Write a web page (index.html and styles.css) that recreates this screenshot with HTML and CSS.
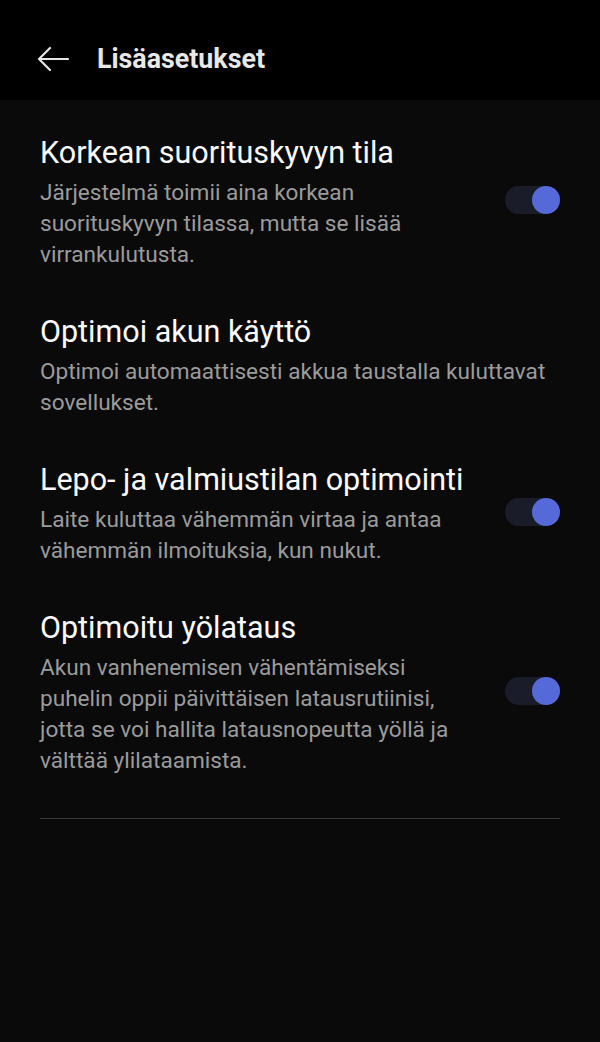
FILE: index.html
```html
<!DOCTYPE html>
<html lang="fi">
<head>
    <meta charset="UTF-8">
    <meta name="viewport" content="width=device-width, initial-scale=1.0">
    <title>Lisäasetukset</title>
    <link rel="stylesheet" href="styles.css">
</head>
<body>

<!-- Top bar -->
<div class="top-bar">
    <svg class="back" width="32" height="26" viewBox="0 0 32 26">
        <path d="M31 13 H2 M13 2 L2 13 L13 24" fill="none" stroke="#e6e6e6" stroke-width="2.2" stroke-linecap="round" stroke-linejoin="round"/>
    </svg>
    <h1>Lisäasetukset</h1>
</div>

<div class="settings">
    <div class="setting">
        <div class="setting-text">
            <div class="setting-title">Korkean suorituskyvyn tila</div>
            <div class="setting-desc">Järjestelmä toimii aina korkean<br>suorituskyvyn tilassa, mutta se lisää<br>virrankulutusta.</div>
        </div>
        <div class="toggle on"><span class="knob"></span></div>
    </div>

    <div class="setting">
        <div class="setting-text">
            <div class="setting-title">Optimoi akun käyttö</div>
            <div class="setting-desc">Optimoi automaattisesti akkua taustalla kuluttavat<br>sovellukset.</div>
        </div>
    </div>

    <div class="setting">
        <div class="setting-text">
            <div class="setting-title">Lepo- ja valmiustilan optimointi</div>
            <div class="setting-desc">Laite kuluttaa vähemmän virtaa ja antaa<br>vähemmän ilmoituksia, kun nukut.</div>
        </div>
        <div class="toggle on"><span class="knob"></span></div>
    </div>

    <div class="setting">
        <div class="setting-text">
            <div class="setting-title">Optimoitu yölataus</div>
            <div class="setting-desc">Akun vanhenemisen vähentämiseksi<br>puhelin oppii päivittäisen latausrutiinisi,<br>jotta se voi hallita latausnopeutta yöllä ja<br>välttää ylilataamista.</div>
        </div>
        <div class="toggle on"><span class="knob"></span></div>
    </div>

    <div class="divider"></div>
</div>

</body>
</html>
```

FILE: styles.css
```css
* {
    margin: 0;
    padding: 0;
    box-sizing: border-box;
}

body {
    font-family: Roboto, 'Noto Sans', sans-serif;
    background: #0a0a0a;
    color: #fff;
    width: 600px;
    height: 1042px;
    overflow: hidden;
}

.top-bar {
    height: 100px;
    background: #000;
    display: flex;
    align-items: center;
    padding: 17px 0 0 37px;
}

.back {
    display: block;
}

.top-bar h1 {
    font-size: 26.8px;
    font-weight: 700;
    color: #e8e8e8;
    margin-left: 28px;
}

.settings {
    padding: 13px 40px 0 40px;
}

.setting {
    display: flex;
    align-items: center;
    justify-content: space-between;
    padding: 22px 0;
}

.setting-text {
    white-space: nowrap;
}

.setting-title {
    font-size: 30.5px;
    line-height: 36px;
    color: #fafafa;
    margin-bottom: 6px;
}

.setting-desc {
    font-size: 22.6px;
    line-height: 31px;
    color: #9b9b9b;
}

.toggle {
    position: relative;
    width: 55px;
    height: 28px;
    border-radius: 14px;
    background: #1b1c2a;
    flex-shrink: 0;
    margin-bottom: 5px;
}

.toggle .knob {
    position: absolute;
    top: 0;
    right: 0;
    width: 28px;
    height: 28px;
    border-radius: 50%;
    background: #5669d8;
}

.divider {
    height: 1px;
    background: #3a3a3a;
    margin-top: 20px;
}
```
